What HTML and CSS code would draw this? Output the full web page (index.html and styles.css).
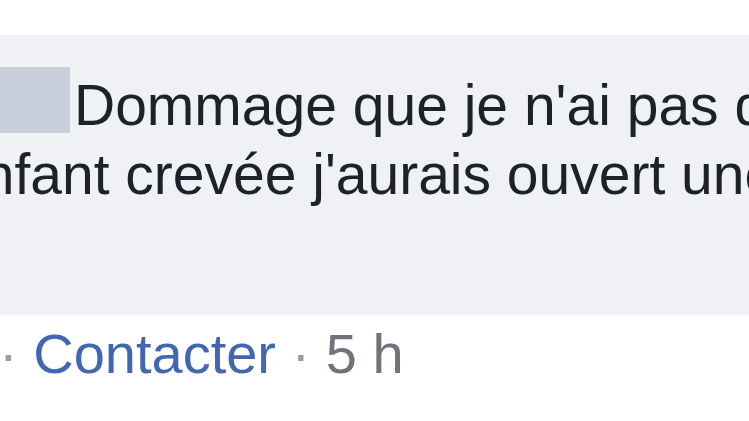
FILE: index.html
```html
<!DOCTYPE html>
<html lang="fr">
<head>
<meta charset="utf-8">
<title>Commentaire</title>
<link rel="stylesheet" href="styles.css">
</head>
<body>
<div class="page">
  <div class="bubble">
    <p class="line"><span class="redacted" aria-label="nom masqué"></span>Dommage que je n'ai pas de petit</p>
    <p class="line">enfant crevée j'aurais ouvert une cagnotte</p>
  </div>
  <div class="actions">
    <span class="sep">·</span> <a class="link" href="#">Contacter</a> <span class="sep">·</span> <span class="time">5 h</span>
  </div>
</div>
</body>
</html>
```

FILE: styles.css
```css
html, body {
  margin: 0;
  padding: 0;
  background: #ffffff;
  overflow: hidden;
}

.page {
  width: 749px;
  height: 421px;
  padding-top: 35px;
  box-sizing: border-box;
  overflow: hidden;
  font-family: "Liberation Sans", Arial, sans-serif;
  font-size: 57px;
  line-height: 68.5px;
}

.bubble {
  background: #f0f1f4;
  height: 280px;
  box-sizing: border-box;
  padding-top: 36px;
  margin-left: -49px;
  color: #1d2129;
}

.line {
  margin: 0;
  white-space: nowrap;
}

.redacted {
  display: inline-block;
  width: 119px;
  height: 66px;
  background: #c8cfda;
  margin: -4px 4px -4px 0;
  vertical-align: -4px;
}

.actions {
  margin-top: 5px;
  margin-left: -1px;
  font-size: 56px;
  white-space: nowrap;
}

.sep {
  color: #9a9da3;
}

.link {
  color: #4267b2;
  text-decoration: none;
}

.time {
  color: #6f737a;
}
```
